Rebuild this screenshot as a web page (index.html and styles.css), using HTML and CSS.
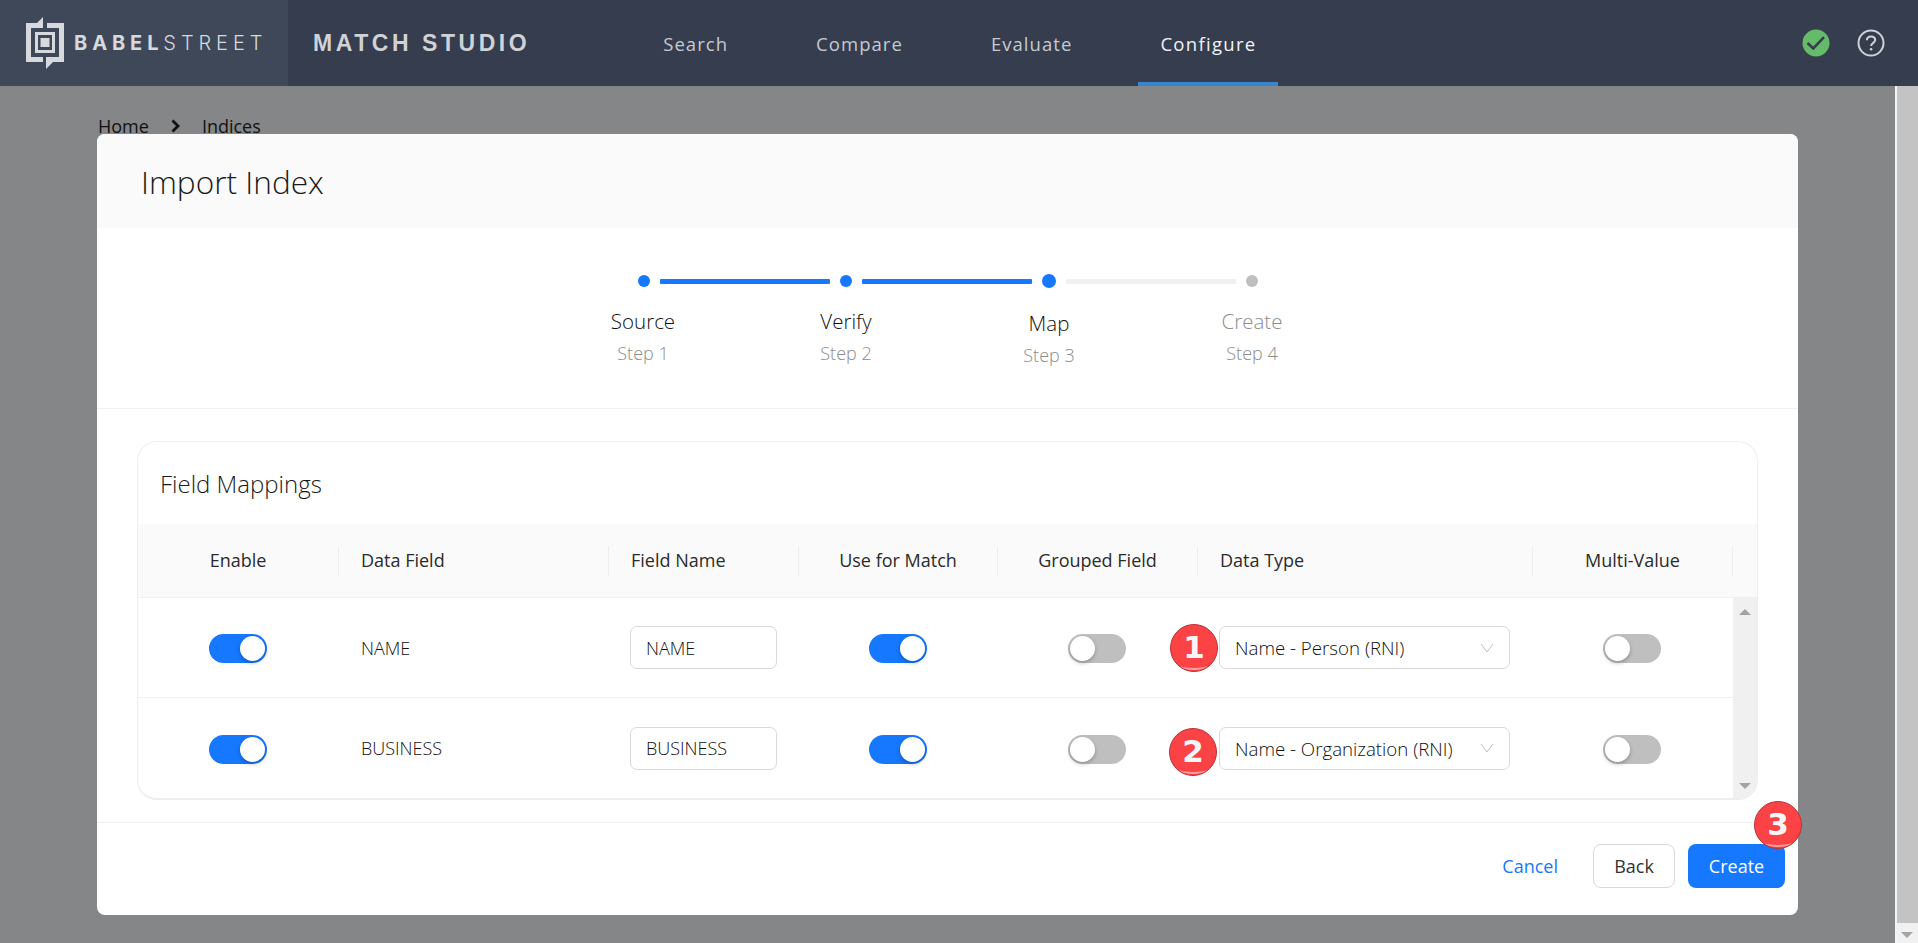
FILE: index.html
```html
<!DOCTYPE html>
<html lang="en">

<head>
    <meta charset="UTF-8">
    <meta name="viewport" content="width=device-width, initial-scale=1.0">
    <title>Match Studio</title>

    <link rel="stylesheet" href="styles.css">
</head>

<body>
    <header class="topbar">
        <div class="brand">
            <svg class="brand-mark" viewBox="0 0 38 52" width="38" height="52">
                <path d="M0 6H11L17 0V11H5V40H17V45H0Z" />
                <path d="M21 6H38V45H27L20 52V40H33V11H21Z" />
                <path fill-rule="evenodd" d="M9 15H29V36H9ZM12 18V33H26V18Z" />
                <rect x="14.500" y="21" width="9" height="9" />
            </svg>
            <span class="brand-name"><strong>BABEL</strong>STREET</span>
        </div>
        <div class="product">MATCH STUDIO</div>
        <nav class="nav">
            <a>Search</a>
            <a>Compare</a>
            <a>Evaluate</a>
            <a class="active">Configure</a>
        </nav>
        <div class="status">
            <svg viewBox="0 0 28 28" width="28" height="28">
                <circle cx="14" cy="14" r="13.500" fill="#66bb6a" />
                <path d="M5.500 14L11.300 19.500L22 8.200" fill="none" stroke="#353d4f" stroke-width="2.600" />
            </svg>
            <svg viewBox="0 0 28 28" width="28" height="28">
                <circle cx="14" cy="14" r="12.500" fill="none" stroke="#d0d2d6" stroke-width="2" />
                <path d="M9.800 11.300C9.800 8.900 11.700 7.400 14 7.400C16.400 7.400 18.200 8.900 18.200 11C18.200 13.800 14.100 13.900 14.100 17" fill="none" stroke="#d0d2d6" stroke-width="2" />
                <circle cx="14.100" cy="20.300" r="1.300" fill="#d0d2d6" />
            </svg>
        </div>
    </header>

    <div class="page">
        <div class="content">
            <div class="breadcrumb">
                <span>Home</span>
                <svg viewBox="0 0 11 14" width="11" height="14">
                    <path d="M2.500 1.500L8 7L2.500 12.500" fill="none" stroke="#111" stroke-width="2.800" />
                </svg>
                <span>Indices</span>
            </div>

            <div class="modal">
                <div class="modal-header">Import Index</div>

                <div class="stepper">
                    <div class="rail">
                        <span class="dot"></span>
                        <span class="line"></span>
                        <span class="dot"></span>
                        <span class="line"></span>
                        <span class="dot current"></span>
                        <span class="line todo"></span>
                        <span class="dot todo"></span>
                    </div>
                    <div class="steps">
                        <div class="step"><b>Source</b><small>Step 1</small></div>
                        <div class="step"><b>Verify</b><small>Step 2</small></div>
                        <div class="step current"><b>Map</b><small>Step 3</small></div>
                        <div class="step todo"><b>Create</b><small>Step 4</small></div>
                    </div>
                </div>

                <div class="modal-body">
                    <div class="card">
                        <div class="card-title">Field Mappings</div>

                        <div class="fm-head">
                            <div class="center">Enable</div>
                            <div class="left">Data Field</div>
                            <div class="left">Field Name</div>
                            <div class="center">Use for Match</div>
                            <div class="center">Grouped Field</div>
                            <div class="left">Data Type</div>
                            <div class="center">Multi-Value</div>
                        </div>

                        <div class="fm-body">
                            <div class="fm-rows">
                                <div class="fm-row">
                                    <div class="cell center"><span class="toggle on"></span></div>
                                    <div class="cell left">NAME</div>
                                    <div class="cell"><input class="field" type="text" value="NAME"></div>
                                    <div class="cell center"><span class="toggle on"></span></div>
                                    <div class="cell center"><span class="toggle"></span></div>
                                    <div class="cell">
                                        <span class="badge badge-one">1</span>
                                        <div class="select">Name - Person (RNI)
                                            <svg viewBox="0 0 14 10" width="14" height="10">
                                                <path d="M1 1L7 9L13 1" fill="none" stroke="#bfbfbf" stroke-width="1" />
                                            </svg>
                                        </div>
                                    </div>
                                    <div class="cell center"><span class="toggle"></span></div>
                                </div>
                                <div class="fm-row">
                                    <div class="cell center"><span class="toggle on"></span></div>
                                    <div class="cell left">BUSINESS</div>
                                    <div class="cell"><input class="field" type="text" value="BUSINESS"></div>
                                    <div class="cell center"><span class="toggle on"></span></div>
                                    <div class="cell center"><span class="toggle"></span></div>
                                    <div class="cell">
                                        <span class="badge badge-two">2</span>
                                        <div class="select">Name - Organization (RNI)
                                            <svg viewBox="0 0 14 10" width="14" height="10">
                                                <path d="M1 1L7 9L13 1" fill="none" stroke="#bfbfbf" stroke-width="1" />
                                            </svg>
                                        </div>
                                    </div>
                                    <div class="cell center"><span class="toggle"></span></div>
                                </div>
                            </div>
                            <div class="fm-scroll">
                                <span class="arrow-up"></span>
                                <span class="arrow-down"></span>
                            </div>
                        </div>
                    </div>
                </div>

                <div class="modal-footer">
                    <a class="cancel">Cancel</a>
                    <button class="btn">Back</button>
                    <button class="btn primary">Create<span class="badge badge-three">3</span></button>
                </div>
            </div>
        </div>

        <div class="page-scroll">
            <div class="thumb"></div>
            <div class="page-scroll-end"><span class="arrow-down"></span></div>
        </div>
    </div>
</body>

</html>
```

FILE: styles.css
```css
html,
body {
    margin: 0;
    height: 943px;
    overflow: hidden;
    font-family: "Open Sans", "Noto Sans", sans-serif;
    color: #2b2b2b;
}

.topbar {
    display: flex;
    align-items: center;
    height: 86px;
    background: #353d4f;
}

.brand {
    display: flex;
    align-items: center;
    gap: 10px;
    box-sizing: border-box;
    width: 288px;
    height: 100%;
    padding-left: 26px;
    background: #3f4859;
}

.brand-mark {
    fill: #d7d9dd;
}

.brand-name {
    font-family: Inter, sans-serif;
    font-size: 20px;
    font-weight: 300;
    letter-spacing: 4.9px;
    color: #d7d9dd;
}

.brand-name strong {
    font-weight: 700;
}

.product {
    margin-left: 25px;
    font-family: "Liberation Sans", sans-serif;
    font-size: 23px;
    font-weight: 700;
    letter-spacing: 3.55px;
    color: #d0d2d6;
}

.nav {
    display: flex;
    gap: 44px;
    height: 100%;
    margin-left: 111px;
}

.nav a {
    display: flex;
    align-items: center;
    box-sizing: border-box;
    height: 100%;
    padding: 0 22px;
    font-size: 18.500px;
    letter-spacing: 1.050px;
    color: #c6cad0;
}

.nav a.active {
    font-weight: 500;
    letter-spacing: 1.300px;
    color: #f2f3f5;
    box-shadow: inset 0 -4px 0 #3787d0;
}

.status {
    display: flex;
    align-items: center;
    gap: 27px;
    margin-left: auto;
    padding-right: 33px;
}

.page {
    display: flex;
    height: 857px;
}

.content {
    position: relative;
    flex: 1;
    padding: 28px 0 0 98px;
    background: #858688;
}

.breadcrumb {
    display: flex;
    align-items: center;
    gap: 21px;
    font-size: 18px;
    line-height: 24px;
    color: #111;
}

.modal {
    position: absolute;
    top: 48px;
    left: 97px;
    width: 1701px;
    height: 781px;
    border-radius: 8px;
    background: #fff;
}

.modal::after {
    content: "";
    position: absolute;
    top: 100%;
    left: 0;
    right: 0;
    height: 28px;
    background: linear-gradient(#6f7071, #7f8082);
    z-index: -1;
}

.modal-header {
    box-sizing: border-box;
    height: 94px;
    padding: 26px 44px 0;
    border-radius: 8px 8px 0 0;
    background: #fafafa;
    font-size: 31.600px;
    font-weight: 300;
    line-height: 44px;
    color: #1a1a1a;
}

.stepper {
    box-sizing: border-box;
    height: 181px;
    padding-top: 46px;
    border-bottom: 1px solid #f0f0f0;
}

.rail {
    display: flex;
    align-items: center;
    justify-content: space-between;
    width: 620px;
    height: 14px;
    margin: 0 auto;
}

.dot {
    width: 12px;
    height: 12px;
    border-radius: 50%;
    background: #1677ff;
}

.dot.current {
    width: 14px;
    height: 14px;
}

.dot.todo {
    background: #bfbfbf;
}

.line {
    width: 170px;
    height: 5px;
    border-radius: 1px;
    background: #1677ff;
}

.line.todo {
    background: #f0f0f0;
}

.steps {
    display: grid;
    grid-template-columns: repeat(4, 203px);
    justify-content: center;
    margin-top: 19px;
}

.step {
    display: flex;
    flex-direction: column;
    align-items: center;
}

.step.current {
    padding-top: 2px;
}

.step b {
    font-size: 20.500px;
    font-weight: 300;
    line-height: 28px;
    color: #111;
}

.step small {
    margin-top: 6px;
    font-size: 18px;
    font-weight: 300;
    line-height: 24px;
    color: #8c8c8c;
}

.step.todo b {
    color: #8c8c8c;
}

.modal-body {
    box-sizing: border-box;
    height: 414px;
    padding: 32px 40px 0;
    border-bottom: 1px solid #f0f0f0;
}

.card {
    box-sizing: border-box;
    height: 359px;
    overflow: hidden;
    border: 1px solid #eeeeee;
    border-bottom-width: 2px;
    border-radius: 20px;
}

.card-title {
    box-sizing: border-box;
    height: 82px;
    padding: 27px 0 0 22px;
    font-size: 24px;
    font-weight: 300;
    line-height: 30px;
    color: #1a1a1a;
}

.fm-head,
.fm-row {
    display: grid;
    grid-template-columns: 201px 270px 190px 199px 200px 335px 200px;
}

.fm-head {
    box-sizing: border-box;
    align-items: center;
    height: 74px;
    border-bottom: 1px solid #f0f0f0;
    background: #fafafa;
    font-size: 18px;
    font-weight: 500;
    color: #2b2b2b;
}

.fm-head > div {
    height: 30px;
    line-height: 29px;
    border-right: 1px solid #eeeeee;
}

.center {
    text-align: center;
}

.left {
    padding-left: 22px;
}

.fm-body {
    display: flex;
    height: 200px;
}

.fm-rows {
    flex: 1;
}

.fm-row {
    box-sizing: border-box;
    height: 100px;
    border-bottom: 1px solid #f0f0f0;
    font-size: 18px;
    font-weight: 300;
    color: #111;
}

.fm-row:last-child {
    border-bottom: none;
}

.cell {
    position: relative;
    display: flex;
    align-items: center;
}

.cell.center {
    justify-content: center;
}

.toggle {
    position: relative;
    display: block;
    width: 58px;
    height: 29px;
    margin: 2px 2px 0 0;
    border-radius: 15px;
    background: #bfbfbf;
}

.toggle::after {
    content: "";
    position: absolute;
    top: 2px;
    left: 2px;
    width: 25px;
    height: 25px;
    border-radius: 50%;
    background: #fff;
    box-shadow: 0 2px 4px rgba(0, 0, 0, 0.25);
}

.toggle.on {
    background: #1677ff;
}

.toggle.on::after {
    left: 31px;
}

.field {
    box-sizing: border-box;
    width: 147px;
    height: 43px;
    margin-left: 21px;
    padding: 0 15px;
    border: 1px solid #d9d9d9;
    border-radius: 7px;
    font-family: inherit;
    font-size: 18px;
    font-weight: 300;
    color: #111;
}

.select {
    display: flex;
    align-items: center;
    justify-content: space-between;
    box-sizing: border-box;
    width: 291px;
    height: 43px;
    margin-left: 21px;
    padding: 0 15px;
    border: 1px solid #d9d9d9;
    border-radius: 7px;
    font-size: 18.700px;
}

.fm-scroll {
    position: relative;
    width: 25px;
    background: #f0f0f0;
}

.arrow-up,
.arrow-down {
    position: absolute;
    left: 6px;
    width: 0;
    height: 0;
    border-left: 6px solid transparent;
    border-right: 6px solid transparent;
}

.arrow-up {
    top: 11px;
    border-bottom: 6px solid #a3a3a3;
}

.arrow-down {
    bottom: 9px;
    border-top: 6px solid #a3a3a3;
}

.badge {
    position: absolute;
    box-sizing: border-box;
    width: 48px;
    height: 48px;
    border: 1px solid #b8343a;
    border-radius: 50%;
    background: #fb4245;
    font-family: "DejaVu Sans", sans-serif;
    font-size: 31px;
    font-weight: 700;
    line-height: 45px;
    text-align: center;
    color: #f6f6f6;
}

.badge::after {
    content: "";
    position: absolute;
    left: 10px;
    bottom: 1px;
    width: 26px;
    height: 7px;
    border-bottom: 2px solid #ff9d9d;
    border-radius: 50%;
}

.badge-one {
    top: 26px;
    left: -28px;
}

.badge-two {
    top: 30px;
    left: -29px;
}

.badge-three {
    top: -43px;
    left: 66px;
}

.modal-footer {
    display: flex;
    align-items: center;
    justify-content: flex-end;
    gap: 13px;
    height: 92px;
    padding: 0 13px 6px 0;
    box-sizing: border-box;
}

.cancel {
    margin-right: 22px;
    font-size: 18px;
    color: #1677ff;
}

.btn {
    position: relative;
    box-sizing: border-box;
    width: 82px;
    height: 44px;
    border: 1px solid #d9d9d9;
    border-radius: 8px;
    background: #fff;
    font-family: inherit;
    font-size: 18px;
    color: #333;
}

.btn.primary {
    width: 97px;
    border: none;
    background: #1677ff;
    color: #fff;
}

.page-scroll {
    display: flex;
    flex-direction: column;
    width: 21px;
    border-left: 2px solid #f4f4f4;
}

.thumb {
    flex: 1;
    background: #c3c3c3;
}

.page-scroll-end {
    position: relative;
    height: 20px;
    background: #f1f1f1;
}

.page-scroll-end .arrow-down {
    left: 4px;
    bottom: 5px;
}
```
